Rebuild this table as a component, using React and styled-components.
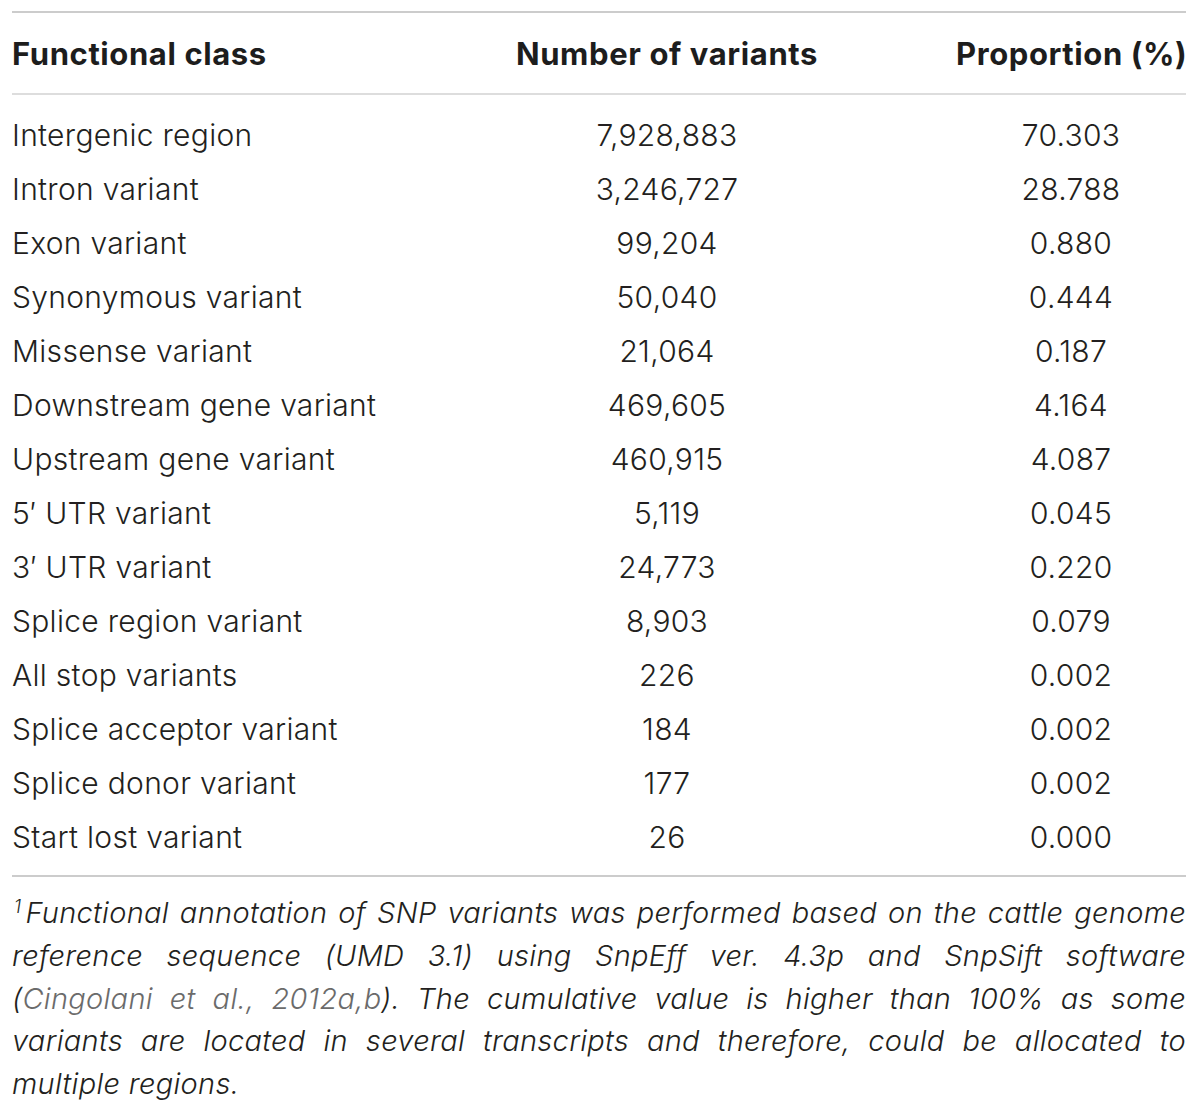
import React from "react";
import styled, { createGlobalStyle } from "styled-components";

// ================= Global =================

const GlobalStyle = createGlobalStyle`
  body {
    margin: 0;
    background: #ffffff;
    color: #231f20;
    font-family: Inter, "Liberation Sans", sans-serif;
  }
`;

// ================= Styled Components =================

const Page = styled.div`
  width: 1174px;
  padding: 11px 12px 0;
`;

const Table = styled.table`
  width: 100%;
  border-collapse: collapse;
  table-layout: fixed;
  border-top: 2px solid #cccccc;
  border-bottom: 2px solid #cccccc;
`;

const Col = styled.col`
  width: ${({ $w }) => $w}px;
`;

const HeadCell = styled.th`
  height: 80px;
  padding: 0;
  font-family: Inter, "Liberation Sans", sans-serif;
  font-weight: 700;
  font-size: 31px;
  letter-spacing: 0.6px;
  color: #1d1d1d;
  text-align: ${({ $align }) => $align || "center"};
  border-bottom: 2px solid #dddddd;
  vertical-align: middle;
  white-space: nowrap;
`;

const SpacerRow = styled.tr`
  height: ${({ $h }) => $h}px;
`;

const Cell = styled.td`
  height: 54px;
  padding: 0;
  font-size: 30px;
  font-weight: 300;
  letter-spacing: 0.3px;
  color: #231f20;
  text-align: ${({ $align }) => $align || "center"};
  vertical-align: middle;
  white-space: nowrap;
`;

const Footnote = styled.div`
  padding: 15px 0 0;
  font-size: 29px;
  font-weight: 300;
  font-style: italic;
  letter-spacing: 0.3px;
  line-height: 42.75px;
  color: #231f20;
`;

const FootLine = styled.div`
  text-align: left;
  text-align-last: ${({ $last }) => ($last ? "left" : "justify")};
`;

const Sup = styled.sup`
  font-size: 18px;
  vertical-align: 10px;
  line-height: 0;
  margin: 0 4px 0 2px;
`;

const Cite = styled.span`
  color: #6b6b6b;
`;

// ================= Data =================

const rows = [
  ["Intergenic region", "7,928,883", "70.303"],
  ["Intron variant", "3,246,727", "28.788"],
  ["Exon variant", "99,204", "0.880"],
  ["Synonymous variant", "50,040", "0.444"],
  ["Missense variant", "21,064", "0.187"],
  ["Downstream gene variant", "469,605", "4.164"],
  ["Upstream gene variant", "460,915", "4.087"],
  ["5\u2032 UTR variant", "5,119", "0.045"],
  ["3\u2032 UTR variant", "24,773", "0.220"],
  ["Splice region variant", "8,903", "0.079"],
  ["All stop variants", "226", "0.002"],
  ["Splice acceptor variant", "184", "0.002"],
  ["Splice donor variant", "177", "0.002"],
  ["Start lost variant", "26", "0.000"],
];

// ================= Main Component =================

const App = () => (
  <>
    <GlobalStyle />
    <Page>
      <Table>
        <colgroup>
          <Col $w={366} />
          <Col $w={578} />
          <Col $w={230} />
        </colgroup>
        <thead>
          <tr>
            <HeadCell $align="left">Functional class</HeadCell>
            <HeadCell>Number of variants</HeadCell>
            <HeadCell>Proportion (%)</HeadCell>
          </tr>
        </thead>
        <tbody>
          <SpacerRow $h={14} />
          {rows.map(([name, count, pct]) => (
            <tr key={name}>
              <Cell $align="left">{name}</Cell>
              <Cell>{count}</Cell>
              <Cell>{pct}</Cell>
            </tr>
          ))}
          <SpacerRow $h={12} />
        </tbody>
      </Table>
      <Footnote>
        <FootLine>
          <Sup>1</Sup>Functional annotation of SNP variants was performed based on the cattle genome
        </FootLine>
        <FootLine>reference sequence (UMD 3.1) using SnpEff ver. 4.3p and SnpSift software</FootLine>
        <FootLine>
          (<Cite>Cingolani et al., 2012a,b</Cite>). The cumulative value is higher than 100% as some
        </FootLine>
        <FootLine>variants are located in several transcripts and therefore, could be allocated to</FootLine>
        <FootLine $last>multiple regions.</FootLine>
      </Footnote>
    </Page>
  </>
);

export default App;
